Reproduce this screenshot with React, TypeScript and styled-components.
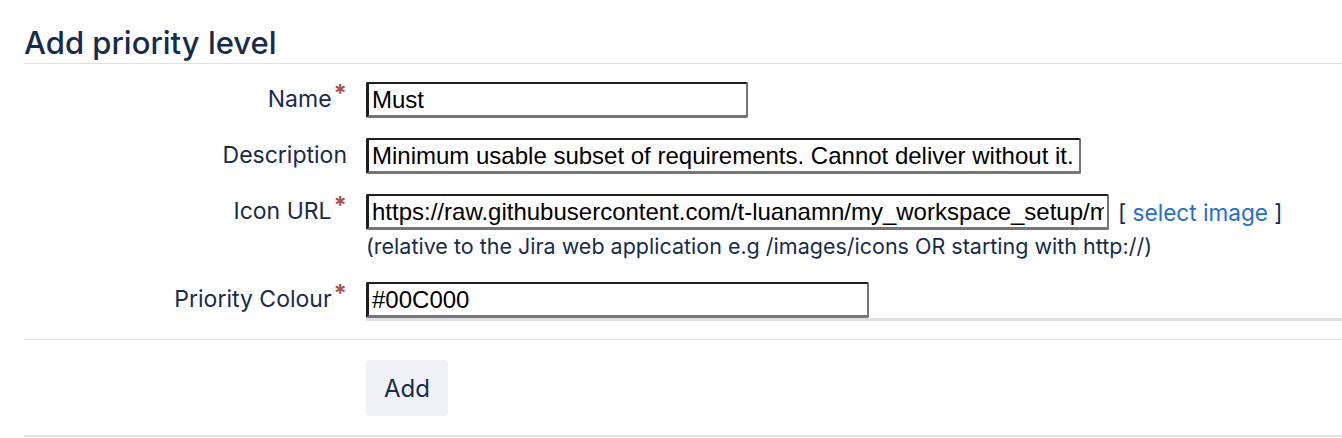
import React from "react";
import styled, { createGlobalStyle } from "styled-components";

const Global = createGlobalStyle`
  html, body { margin: 0; padding: 0; background: #ffffff; }
  body { font-family: Inter, "Noto Sans", sans-serif; color: #172b4d; }
`;

const Page = styled.div`
  padding: 23px 0 0 24px;
  width: 1318px;
`;

const Heading = styled.h2`
  margin: 0;
  font-size: 31px;
  line-height: 40px;
  font-weight: 500;
  color: #172b4d;
  border-bottom: 1px solid #dfe1e6;
`;

const Fields = styled.div`
  display: flex;
  flex-direction: column;
  gap: 20px;
  padding: 18px 0 18px;
  border-bottom: 1px solid #dfe1e6;
`;

const Row = styled.div`
  display: grid;
  grid-template-columns: 323px 1fr;
  column-gap: 19px;
  align-items: start;
`;

const Label = styled.label`
  display: block;
  height: 36px;
  text-align: right;
  font-size: 23px;
  line-height: 34px;
  color: #172b4d;
  white-space: nowrap;
`;

const Req = styled.span`
  position: relative;
  top: -5px;
  display: inline-block;
  line-height: 1;
  color: #a8524d;
  font-size: 24px;
  font-weight: 700;
  margin-left: 2px;
`;

const FieldCol = styled.div<{ $bar?: boolean }>`
  display: flex;
  flex-direction: column;
  align-items: flex-start;
  ${(p) => (p.$bar ? "border-bottom: 3px solid #dfe1e6;" : "")}
`;

const InputLine = styled.div`
  display: flex;
  align-items: center;
  gap: 9px;
`;

const TextInput = styled.input<{ $w: number }>`
  box-sizing: border-box;
  width: ${(p) => p.$w}px;
  height: 36px;
  margin: 0;
  padding: 0 3px;
  border-style: solid;
  border-width: 2px 2px 3px 3px;
  border-top-color: #1e1e1e;
  border-left-color: #1e1e1e;
  border-right-color: #767676;
  border-bottom-color: #767676;
  border-radius: 2px;
  font-family: "Liberation Sans", Arial, sans-serif;
  font-size: 24px;
  color: #000;
  background: #fff;
  outline: none;
`;

const Bracket = styled.span`
  font-size: 22.6px;
  color: #172b4d;
  white-space: nowrap;
`;

const Link = styled.a`
  color: #256dd9;
  text-decoration: none;
`;

const Hint = styled.div`
  font-size: 21.5px;
  line-height: 32px;
  color: #172b4d;
  white-space: nowrap;
`;

const Actions = styled.div`
  display: grid;
  grid-template-columns: 323px 1fr;
  column-gap: 19px;
  padding: 20px 0 19px;
  border-bottom: 2px solid #dfe1e6;
`;

const Button = styled.button`
  grid-column: 2;
  justify-self: start;
  height: 56px;
  padding: 0 18px;
  border: none;
  border-radius: 4px;
  background: #f0f1f4;
  color: #172b4d;
  font-family: Inter, "Noto Sans", sans-serif;
  font-size: 24px;
  cursor: pointer;
`;

export default function App() {
  return (
    <>
      <Global />
      <Page>
        <Heading>Add priority level</Heading>
        <Fields>
          <Row>
            <Label>
              Name<Req>*</Req>
            </Label>
            <FieldCol>
              <TextInput $w={382} readOnly value="Must" />
            </FieldCol>
          </Row>
          <Row>
            <Label>Description</Label>
            <FieldCol>
              <TextInput
                $w={715}
                readOnly
                value="Minimum usable subset of requirements. Cannot deliver without it."
              />
            </FieldCol>
          </Row>
          <Row>
            <Label>
              Icon URL<Req>*</Req>
            </Label>
            <FieldCol>
              <InputLine>
                <TextInput
                  $w={743}
                  readOnly
                  value="https://raw.githubusercontent.com/t-luanamn/my_workspace_setup/main/icons/must.png"
                />
                <Bracket>
                  [ <Link href="#">select image</Link> ]
                </Bracket>
              </InputLine>
              <Hint>
                (relative to the Jira web application e.g /images/icons OR starting with http://)
              </Hint>
            </FieldCol>
          </Row>
          <Row>
            <Label>
              Priority Colour<Req>*</Req>
            </Label>
            <FieldCol $bar>
              <TextInput $w={503} readOnly value="#00C000" />
            </FieldCol>
          </Row>
        </Fields>
        <Actions>
          <Button>Add</Button>
        </Actions>
      </Page>
    </>
  );
}
